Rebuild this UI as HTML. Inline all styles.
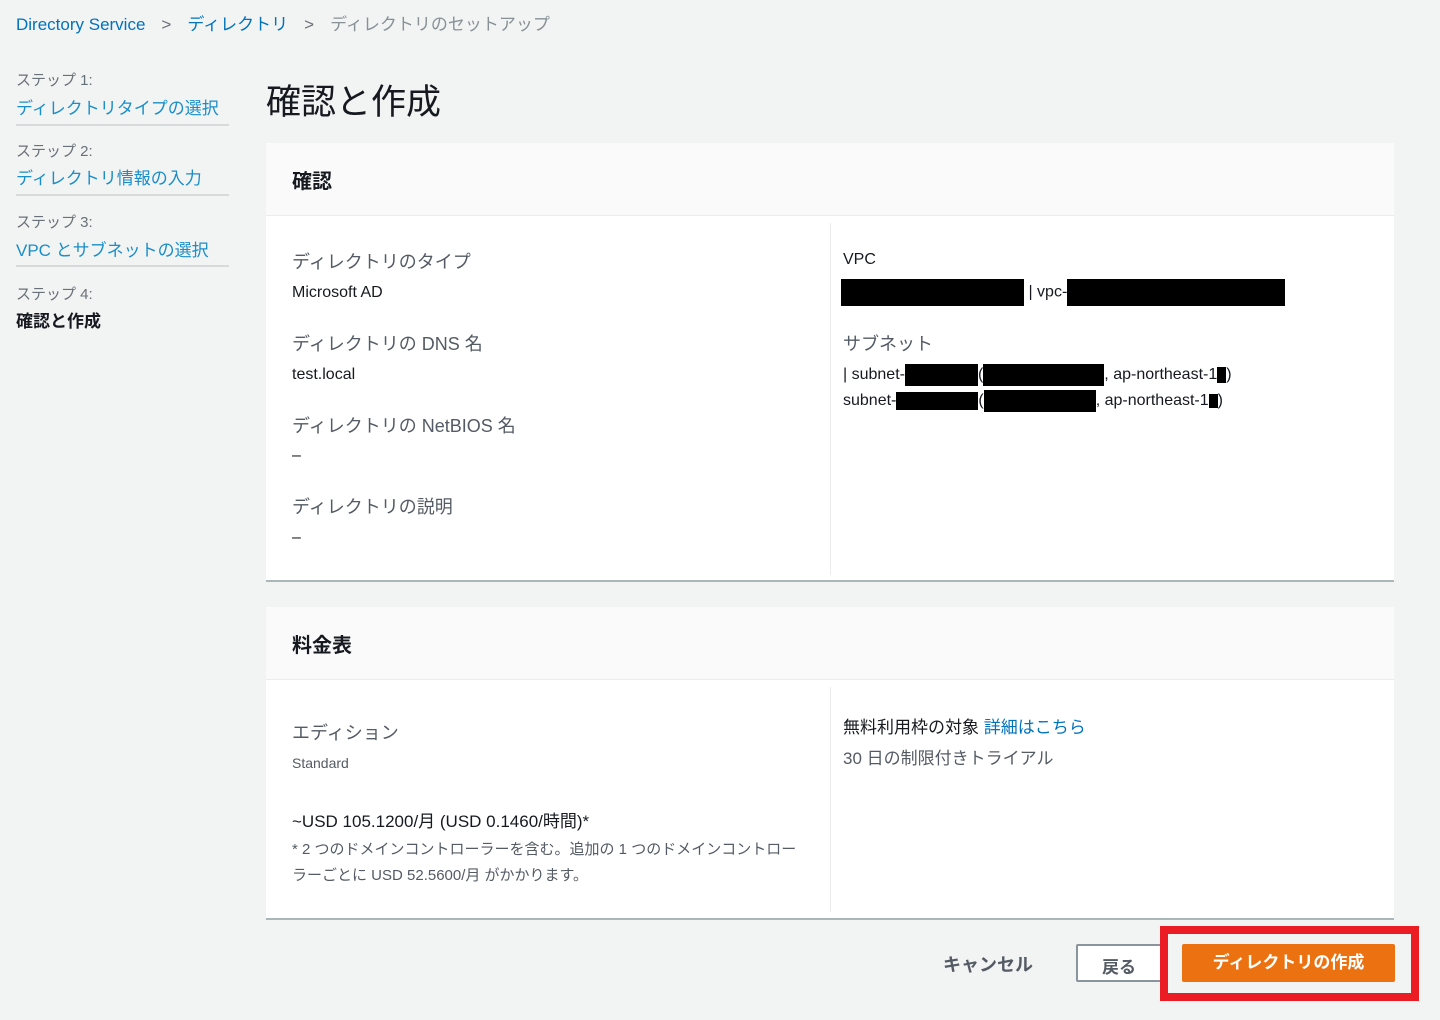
<!DOCTYPE html>
<html><head><meta charset="utf-8"><style>
*{margin:0;padding:0;box-sizing:border-box}
body{width:1440px;height:1020px;background:#f2f3f3;font-family:"Liberation Sans","Noto Sans CJK JP",sans-serif;position:relative;overflow:hidden;color:#16191f}
.a{position:absolute;white-space:nowrap}
.blue{color:#0073bb}.lb{color:#1a8ec8}.g{color:#687078}
.lbl{font-size:18px;color:#545b64}
.val{font-size:16px;color:#16191f}
.panel{position:absolute;left:266px;width:1128px;background:#fff;border-bottom:2px solid #aab7b8}
.ph{height:73px;background:#fafafa;border-bottom:1px solid #eaeded;font-size:20px;font-weight:bold;padding:22px 0 0 26px}
.vd{position:absolute;left:564px;width:1px;background:#eaeded}
.red{background:#000;display:inline-block;vertical-align:middle}
.hr{position:absolute;left:16px;width:213px;height:2px;background:#d5dbdb}
</style></head><body>
<div class="a" style="left:16px;top:10px;font-size:17px"><span class="blue">Directory Service</span><span class="g" style="margin:0 16px">&gt;</span><span class="blue">ディレクトリ</span><span class="g" style="margin:0 16px">&gt;</span><span style="color:#879196">ディレクトリのセットアップ</span></div>

<div class="a g" style="left:16px;top:69px;font-size:15px">ステップ 1:</div>
<div class="a lb" style="left:16px;top:94px;font-size:17px">ディレクトリタイプの選択</div>
<div class="hr" style="top:124px"></div>
<div class="a g" style="left:16px;top:140px;font-size:15px">ステップ 2:</div>
<div class="a lb" style="left:16px;top:164px;font-size:17px">ディレクトリ情報の入力</div>
<div class="hr" style="top:194px"></div>
<div class="a g" style="left:16px;top:211px;font-size:15px">ステップ 3:</div>
<div class="a lb" style="left:16px;top:236px;font-size:17px">VPC とサブネットの選択</div>
<div class="hr" style="top:265px"></div>
<div class="a g" style="left:16px;top:283px;font-size:15px">ステップ 4:</div>
<div class="a" style="left:16px;top:307px;font-size:17px;font-weight:bold">確認と作成</div>

<div class="a" style="left:266px;top:74px;font-size:35px">確認と作成</div>

<div class="panel" style="top:143px;height:439px">
 <div class="ph">確認</div>
 <div class="vd" style="top:80px;height:352px"></div>
 <div class="a lbl" style="left:26px;top:105px">ディレクトリのタイプ</div>
 <div class="a val" style="left:26px;top:141px">Microsoft AD</div>
 <div class="a lbl" style="left:26px;top:187px">ディレクトリの DNS 名</div>
 <div class="a val" style="left:26px;top:223px">test.local</div>
 <div class="a lbl" style="left:26px;top:269px">ディレクトリの NetBIOS 名</div>
 <div class="a val" style="left:26px;top:304px">–</div>
 <div class="a lbl" style="left:26px;top:350px">ディレクトリの説明</div>
 <div class="a val" style="left:26px;top:386px">–</div>
 <div class="a" style="left:577px;top:108px;font-size:16px;color:#16191f">VPC</div>
 <div class="a val" style="left:575px;top:136px"><span class="red" style="width:183px;height:27px"></span> | vpc-<span class="red" style="width:218px;height:27px"></span></div>
 <div class="a lbl" style="left:577px;top:187px">サブネット</div>
 <div class="a val" style="left:577px;top:221px">| subnet-<span class="red" style="width:73px;height:22px"></span>(<span class="red" style="width:121px;height:22px"></span>, ap-northeast-1<span class="red" style="width:9px;height:16px"></span>)</div>
 <div class="a val" style="left:577px;top:247px">subnet-<span class="red" style="width:82px;height:18px"></span>(<span class="red" style="width:112px;height:22px"></span>, ap-northeast-1<span class="red" style="width:9px;height:14px"></span>)</div>
</div>

<div class="panel" style="top:607px;height:313px">
 <div class="ph">料金表</div>
 <div class="vd" style="top:80px;height:225px"></div>
 <div class="a lbl" style="left:26px;top:112px">エディション</div>
 <div class="a" style="left:26px;top:148px;font-size:14px;color:#545b64">Standard</div>
 <div class="a val" style="left:26px;top:200px;font-size:17px">~USD 105.1200/月 (USD 0.1460/時間)*</div>
 <div class="a" style="left:26px;top:230px;font-size:15px;color:#545b64;line-height:26px">* 2 つのドメインコントローラーを含む。追加の 1 つのドメインコントロー<br>ラーごとに USD 52.5600/月 がかかります。</div>
 <div class="a val" style="left:577px;top:106px;font-size:17px">無料利用枠の対象 <span class="blue">詳細はこちら</span></div>
 <div class="a lbl" style="left:577px;top:137px;font-size:17px">30 日の制限付きトライアル</div>
</div>

<div class="a" style="left:943px;top:951px;font-size:18px;font-weight:bold;color:#545b64">キャンセル</div>
<div class="a" style="left:1076px;top:944px;width:90px;height:38px;border:2px solid #8a949c;border-radius:2px;background:#fff;font-size:17px;font-weight:bold;color:#545b64;padding:7px 0 0 24px">戻る</div>
<div class="a" style="left:1160px;top:926px;width:259px;height:75px;border:8px solid #ec1c24;background:#f2f3f3"></div>
<div class="a" style="left:1182px;top:944px;width:213px;height:38px;background:#ec7211;border-radius:2px;color:#fff;font-size:17px;font-weight:bold;text-align:center;line-height:38px">ディレクトリの作成</div>
</body></html>
